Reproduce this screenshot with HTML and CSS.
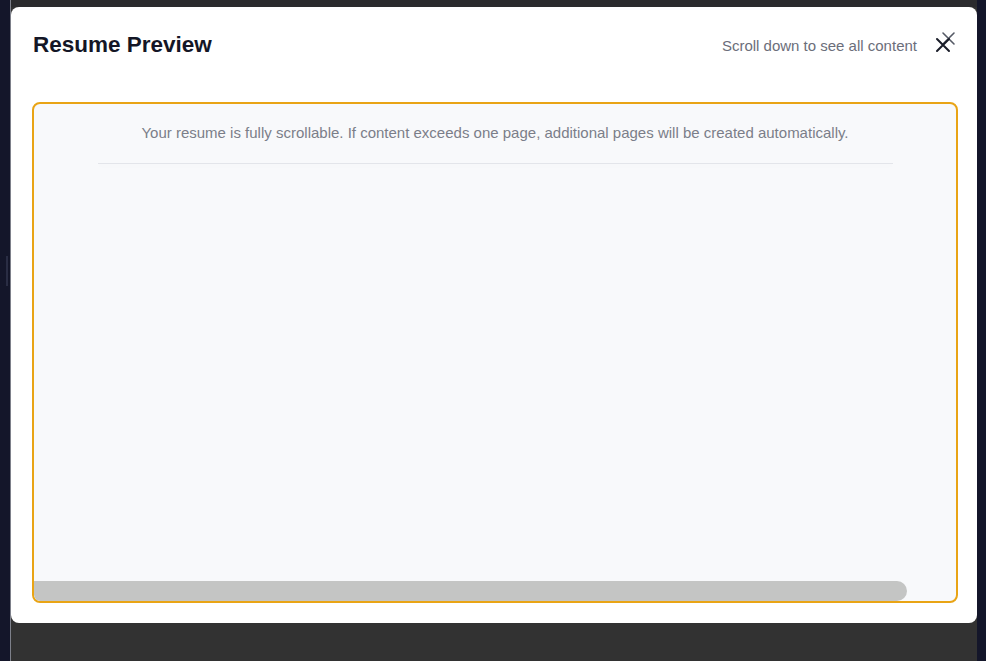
FILE: index.html
```html
<!DOCTYPE html>
<html>
<head>
<meta charset="utf-8">
<link rel="stylesheet" href="styles.css">
</head>
<body>
<div class="rail rail-left"><div class="rail-thumb"></div></div>
<div class="stage">
  <div class="modal">
    <div class="modal-header">
      <h1 class="title">Resume Preview</h1>
      <div class="header-right">
        <span class="hint">Scroll down to see all content</span>
        <button class="close" aria-label="Close">
          <svg width="24" height="26" viewBox="0 0 24 26">
            <path d="M8 2 L19 13 M19 2 L8 13" stroke="#555a66" stroke-width="1.6" stroke-linecap="round" fill="none"/>
            <path d="M2 8 L14 20 M14 8 L2 20" stroke="#1a1d29" stroke-width="2" stroke-linecap="round" fill="none"/>
          </svg>
        </button>
      </div>
    </div>
    <div class="preview">
      <p class="notice">Your resume is fully scrollable. If content exceeds one page, additional pages will be created automatically.</p>
      <div class="divider"></div>
      <div class="scrollbar"><div class="thumb"></div></div>
    </div>
  </div>
</div>
<div class="rail rail-right"></div>
</body>
</html>
```

FILE: styles.css
```css
html, body {
  margin: 0;
  padding: 0;
}
body {
  width: 986px;
  height: 661px;
  display: flex;
  background: #323232;
  font-family: "Liberation Sans", Arial, sans-serif;
  overflow: hidden;
}
.rail {
  background: #14162a;
  flex: none;
  position: relative;
}
.rail-left {
  width: 10px;
  border-right: 1px solid #7d808a;
}
.rail-thumb {
  position: absolute;
  left: 6px;
  top: 256px;
  width: 2px;
  height: 30px;
  background: #2a2d44;
}
.rail-right {
  width: 9px;
}
.stage {
  flex: 1;
  display: flex;
  flex-direction: column;
  padding-top: 7px;
  background: linear-gradient(#2b2b2e 0, #2b2b2e 7px, #323232 7px);
}
.modal {
  height: 616px;
  box-sizing: border-box;
  background: #ffffff;
  border-radius: 8px;
  padding: 0 19px 20px 21px;
  display: flex;
  flex-direction: column;
}
.modal-header {
  height: 95px;
  display: flex;
  align-items: flex-start;
  justify-content: space-between;
  padding-left: 1px;
}
.title {
  margin: 0;
  margin-top: 25px;
  font-size: 22.5px;
  font-weight: 700;
  color: #141626;
  line-height: 26px;
}
.header-right {
  display: flex;
  align-items: flex-start;
  margin-top: 30px;
  position: relative;
}
.hint {
  font-size: 15px;
  color: #6b6e7a;
  line-height: 18px;
  margin-right: 41px;
}
.close {
  position: absolute;
  right: -1px;
  top: -6px;
  padding: 0;
  border: 0;
  background: none;
  width: 24px;
  height: 26px;
  cursor: pointer;
}
.close svg {
  display: block;
}
.preview {
  flex: 1;
  border: 2px solid #e9a415;
  border-radius: 8px;
  background: #f8f9fb;
  display: flex;
  flex-direction: column;
  align-items: center;
  overflow: hidden;
}
.notice {
  margin: 20px 0 0;
  font-size: 15px;
  line-height: 18px;
  color: #7b7e89;
  text-align: center;
}
.divider {
  width: 795px;
  height: 1px;
  background: #e3e5ea;
  margin-top: 21px;
  box-shadow: 0 2px 4px rgba(0,0,0,0.03);
}
.scrollbar {
  margin-top: auto;
  align-self: stretch;
  height: 22px;
  display: flex;
}
.thumb {
  width: 873px;
  height: 20px;
  margin-top: 2px;
  background: #c4c5c4;
  border-radius: 0 10px 10px 6px;
}
```
